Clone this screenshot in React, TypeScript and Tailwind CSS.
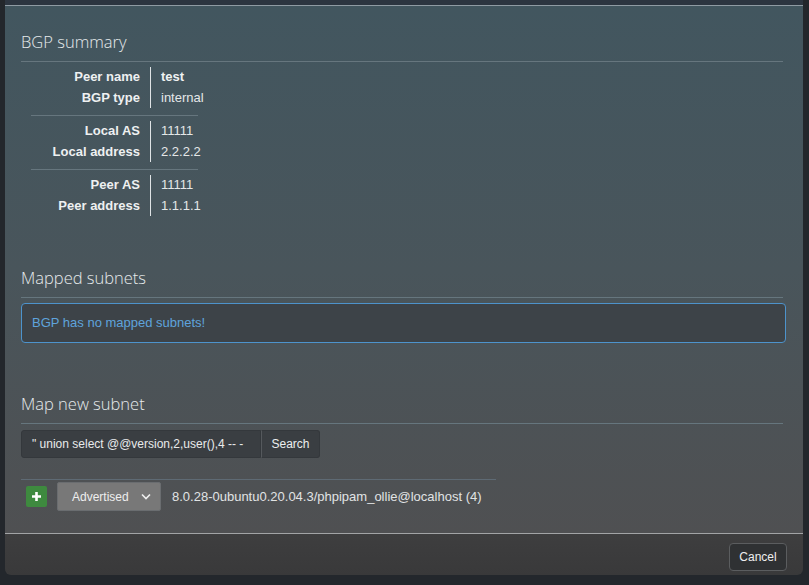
import React from "react";

const groups = [
  [
    ["Peer name", "test", true],
    ["BGP type", "internal", false],
  ],
  [
    ["Local AS", "11111", false],
    ["Local address", "2.2.2.2", false],
  ],
  [
    ["Peer AS", "11111", false],
    ["Peer address", "1.1.1.1", false],
  ],
] as const;

function Heading({ children }: { children: React.ReactNode }) {
  return (
    <div
      className="text-[16.5px] leading-[20px] font-light text-[#e6eaec] pt-[1px] pb-[9px] border-b border-[#66767e] mr-[3px]"
      style={{ fontFamily: '"Open Sans", sans-serif' }}
    >
      {children}
    </div>
  );
}

export default function App() {
  return (
    <div
      className="w-[809px] h-[585px] overflow-hidden bg-[#23272c]"
      style={{ fontFamily: '"Liberation Sans", Arial, sans-serif' }}
    >
      <div className="ml-[5px] w-[798px] rounded-b-[6px] overflow-hidden">
        <div className="h-[6px] bg-[#2c3540] border-b border-[#8f9ba3]" />
        <div className="bg-gradient-to-b from-[#42565f] via-[#49555b] to-[#4f5052] pl-[16px] pr-[17px] pt-[25px] pb-[20px] h-[527px]">
          <Heading>BGP summary</Heading>
          <div className="ml-[10px] w-[167px]">
            {groups.map((g, gi) => (
              <div
                key={gi}
                className={
                  "pt-[5px] pb-[7px] " + (gi > 0 ? "border-t border-[#66767e]" : "")
                }
              >
                {g.map(([label, value, bold]) => (
                  <div key={label} className="flex text-[13px] leading-[20.5px]">
                    <div className="w-[120px] shrink-0 pr-[10px] text-right font-bold text-[#eef0f1] border-r border-[#dfe3e5]">
                      {label}
                    </div>
                    <div
                      className={
                        "pl-[10px] whitespace-nowrap text-[#e4e7e8] " +
                        (bold ? "font-bold text-[#f0f2f3]" : "")
                      }
                    >
                      {value}
                    </div>
                  </div>
                ))}
              </div>
            ))}
          </div>

          <div className="mt-[44px]">
            <Heading>Mapped subnets</Heading>
          </div>
          <div className="mt-[5px] h-[40px] rounded-[4px] border border-[#4d93cc] bg-[#3d4348] flex items-center pl-[10px] text-[13px] text-[#5fa3dc]">
            BGP has no mapped subnets!
          </div>

          <div className="mt-[50px]">
            <Heading>Map new subnet</Heading>
          </div>
          <div className="mt-[6px] flex h-[28px] w-[299px]">
            <div className="w-[240px] bg-[#3a3e42] border border-[#34383c] rounded-l-[3px] flex items-center pl-[10px] text-[12px] text-[#e8eaeb] whitespace-nowrap overflow-hidden">
              " union select @@version,2,user(),4 -- -
            </div>
            <div className="w-[59px] bg-[#3a3e42] border border-[#34383c] border-l-[#55595d] rounded-r-[3px] flex items-center justify-center text-[12px] text-[#eceeef]">
              Search
            </div>
          </div>

          <div className="mt-[21px] w-[475px] border-t border-[#5e6a74] pt-[2px] flex items-center">
            <div className="ml-[5px] w-[21px] h-[21px] rounded-[2px] bg-[#3e8a3f] flex items-center justify-center">
              <svg width="11" height="11" viewBox="0 0 11 11">
                <path d="M5.5 1v9M1 5.5h9" stroke="#ffffff" strokeWidth="2.6" />
              </svg>
            </div>
            <div className="ml-[10px] w-[104px] h-[29px] bg-[#787878] border border-[#6a6d70] rounded-[2px] flex items-center pl-[14px] pr-[9px] text-[12px] text-[#eeeeee]">
              <span className="flex-1">Advertised</span>
              <svg width="10" height="7" viewBox="0 0 10 7">
                <path d="M1 1.5l4 4 4-4" stroke="#f0f0f0" strokeWidth="1.6" fill="none" />
              </svg>
            </div>
            <div className="ml-[11px] text-[13px] text-[#e1e3e4] whitespace-nowrap">
              8.0.28-0ubuntu0.20.04.3/phpipam_ollie@localhost (4)
            </div>
          </div>
        </div>
        <div className="border-t border-[#a2a4a6] bg-gradient-to-b from-[#3e3e3f] to-[#39393a] h-[42px] pt-[9px] pr-[16px] flex justify-end items-start">
          <div className="w-[58px] h-[28px] rounded-[4px] border border-[#5b5d5f] bg-[#2f3133] flex items-center justify-center text-[12px] text-[#eeeeee]">
            Cancel
          </div>
        </div>
      </div>
    </div>
  );
}
